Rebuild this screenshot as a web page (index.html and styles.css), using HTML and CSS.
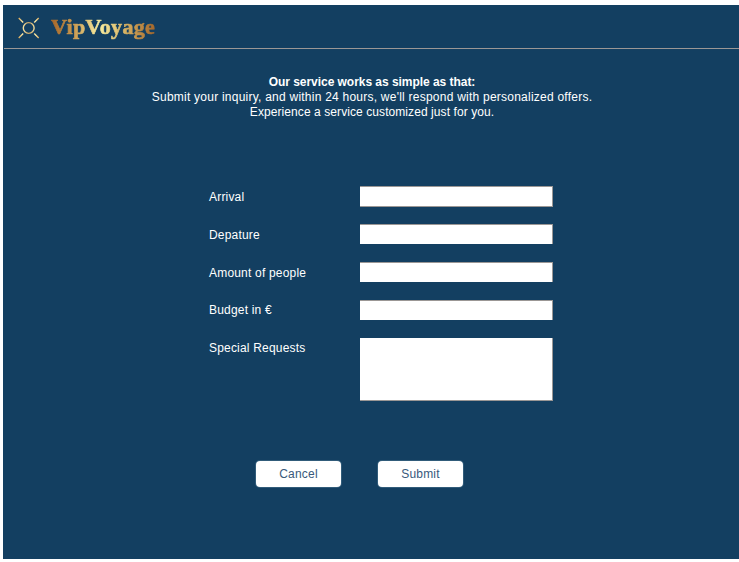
FILE: index.html
```html
<!DOCTYPE html>
<html lang="en">
<head>
<meta charset="utf-8">
<title>VipVoyage</title>
<link rel="stylesheet" href="styles.css">
</head>
<body>
<div class="page">
  <header class="header">
    <svg class="logo" width="22" height="22" viewBox="0 0 22 22" fill="none">
      <defs>
        <linearGradient id="gold" gradientUnits="userSpaceOnUse" x1="0" y1="0" x2="22" y2="0">
          <stop offset="0" stop-color="#d09a4a"/>
          <stop offset=".2" stop-color="#fbe9a6"/>
          <stop offset=".5" stop-color="#c9a262"/>
          <stop offset=".8" stop-color="#fbe9a6"/>
          <stop offset="1" stop-color="#d09a4a"/>
        </linearGradient>
      </defs>
      <g stroke="url(#gold)" stroke-width="1.4">
        <circle cx="10.7" cy="11" r="5.4"/>
        <path d="M.7 1 5.2 5.5M20.7 1 16.2 5.5M.7 21 5.2 16.5M20.7 21 16.2 16.5"/>
      </g>
    </svg>
    <span class="brand">VipVoyage</span>
  </header>
  <main class="main">
    <div class="intro">
      <strong class="line lead">Our service works as simple as that:</strong>
      <span class="line body">Submit your inquiry, and within 24 hours, we'll respond with personalized offers.</span>
      <span class="line tail">Experience a service customized just for you.</span>
    </div>
    <form class="form">
      <label for="arrival">Arrival</label><input class="closed" id="arrival" type="text">
      <label for="departure">Depature</label><input id="departure" type="text">
      <label for="people">Amount of people</label><input id="people" type="text">
      <label class="raised" for="budget">Budget in €</label><input id="budget" type="text">
      <label class="raised" for="requests">Special Requests</label><textarea id="requests"></textarea>
    </form>
    <div class="actions">
      <button type="button">Cancel</button>
      <button type="button">Submit</button>
    </div>
  </main>
</div>
</body>
</html>
```
FILE: styles.css
```css
* { box-sizing: border-box; }
body {
  margin: 0;
  background: #fff;
  font: 12px/15px "Liberation Sans", Arial, sans-serif;
  color: #fff;
  overflow: hidden;
}
.page {
  margin: 5px 0 3px 3px;
  height: 554px;
  background: #133f61;
}
.header {
  display: flex;
  align-items: center;
  height: 44px;
  margin-left: 1px;
  padding-left: 14px;
  padding-top: 3px;
  border-bottom: 1px solid #9b9795;
}
.logo { flex: none; }
.brand {
  margin-left: 11px;
  font: bold 22px/26px "Liberation Serif", serif;
  letter-spacing: 0.35px;
  margin-top: -3px;
  color: transparent;
  -webkit-text-stroke: 0.7px transparent;
  background: linear-gradient(90deg, #a4662a, #c99a50 22%, #f8eda0 46%, #d9b565 70%, #a4662a);
  -webkit-background-clip: text;
  background-clip: text;
}
.intro {
  display: flex;
  flex-direction: column;
  align-items: center;
  padding: 26px 0 0 2px;
}
.line { white-space: nowrap; }
.lead { letter-spacing: -0.04px; }
.body { letter-spacing: 0.235px; }
.tail { letter-spacing: 0.08px; }
.form {
  display: grid;
  grid-template-columns: 151px 193px;
  grid-template-rows: 38px 38px 38px 38px 63px;
  margin: 66px 0 0 206px;
}
label { padding-top: 4px; letter-spacing: 0.19px; }
.raised { padding-top: 3px; }
input, textarea {
  display: block;
  width: 193px;
  height: 20px;
  margin: 0;
  padding: 2px 4px;
  border: solid #9b9795;
  border-width: 1px 1px 0 0;
  border-radius: 0;
  background: #fff;
  font: inherit;
  color: #133f61;
  outline: 0;
}
.closed { height: 21px; border-bottom-width: 1px; }
textarea { height: 63px; border-width: 0 1px 1px 0; resize: none; }
.actions {
  display: flex;
  gap: 37px;
  margin: 60px 0 0 253px;
}
button {
  width: 85px;
  height: 26px;
  padding: 0;
  border: 0;
  border-radius: 4px;
  background: #fff;
  box-shadow: 0 0 0 1px #315c7a;
  font: 12px/15px "Liberation Sans", Arial, sans-serif;
  letter-spacing: 0.2px;
  color: #38597c;
}
```
